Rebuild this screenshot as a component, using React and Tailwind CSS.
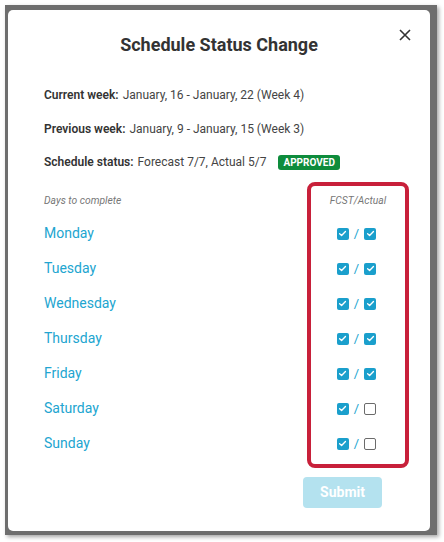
import React from 'react';

const days = [
  { name: 'Monday', fcst: true, actual: true },
  { name: 'Tuesday', fcst: true, actual: true },
  { name: 'Wednesday', fcst: true, actual: true },
  { name: 'Thursday', fcst: true, actual: true },
  { name: 'Friday', fcst: true, actual: true },
  { name: 'Saturday', fcst: true, actual: false },
  { name: 'Sunday', fcst: true, actual: false },
];

function Box({ checked }) {
  if (!checked) {
    return <span className="block w-[12px] h-[12px] rounded-[2px] border-[1.5px] border-[#6b6b6b] bg-white" />;
  }
  return (
    <span className="flex w-[12px] h-[12px] rounded-[2px] bg-[#1a9fcc] items-center justify-center">
      <svg width="9" height="9" viewBox="0 0 10 10" fill="none">
        <path d="M1.8 5.2 L4 7.2 L8.3 2.8" stroke="white" strokeWidth="1.5" strokeLinecap="round" strokeLinejoin="round" />
      </svg>
    </span>
  );
}

function InfoLine({ label, children }) {
  return (
    <div className="flex items-center h-[16px] text-[12px] leading-[16px]">
      <span className="font-semibold text-[#333]">{label}</span>
      <span className="ml-[4px] text-[#444]">{children}</span>
    </div>
  );
}

export default function App() {
  return (
    <div className="w-[444px] h-[542px] bg-white p-[5px] font-['Roboto',sans-serif]">
      <div className="w-[432px] h-[530px] bg-[#6e6e6e] pl-[3px] pt-[5px] shadow-[2px_2px_4px_rgba(0,0,0,0.35)]">
        <div className="relative w-[422px] h-[521px] bg-white rounded-[5px] flex flex-col">
          <button className="absolute top-[19px] right-[19px] text-[#333]">
            <svg width="12" height="12" viewBox="0 0 12 12" fill="none">
              <path d="M1 1 L11 11 M11 1 L1 11" stroke="#333" strokeWidth="1.6" />
            </svg>
          </button>

          <h1 className="pt-[23px] text-center text-[18px] leading-[24px] font-bold text-[#333]">
            Schedule Status Change
          </h1>

          <div className="px-[36px] mt-[30px] flex flex-col gap-[17.5px]">
            <InfoLine label="Current week:">January, 16 - January, 22 (Week 4)</InfoLine>
            <InfoLine label="Previous week:">January, 9 - January, 15 (Week 3)</InfoLine>
            <InfoLine label="Schedule status:">
              Forecast 7/7, Actual 5/7
              <span className="ml-[12px] inline-block align-middle px-[5px] h-[15px] leading-[15px] rounded-[3px] bg-[#0e8c3c] text-white text-[10px] font-bold">
                APPROVED
              </span>
            </InfoLine>
          </div>

          <div className="mt-[12px] flex pl-[36px] pr-[21px]">
            <div className="flex-1 pt-[13px]">
              <div className="text-[10.3px] leading-[12px] italic text-[#777]">Days to complete</div>
              <div className="mt-[9px]">
                {days.map((d) => (
                  <div key={d.name} className="h-[35px] flex items-center text-[14px] text-[#22a5d0]">
                    {d.name}
                  </div>
                ))}
              </div>
            </div>
            <div className="w-[102px] h-[286px] border-[4px] border-[#c8203a] rounded-[8px] pt-[9px]">
              <div className="text-center text-[10.3px] leading-[12px] italic text-[#777]">FCST/Actual</div>
              <div className="mt-[9px]">
                {days.map((d) => (
                  <div key={d.name} className="h-[35px] flex items-center justify-center pr-[3px] gap-[5px]">
                    <Box checked={d.fcst} />
                    <span className="text-[13px] leading-none text-[#22a5d0]">/</span>
                    <Box checked={d.actual} />
                  </div>
                ))}
              </div>
            </div>
          </div>

          <div className="flex justify-end pr-[48px] mt-[9px]">
            <button className="w-[79px] h-[31px] rounded-[4px] bg-[#b4e2ef] text-white text-[14px] font-bold">
              Submit
            </button>
          </div>
        </div>
      </div>
    </div>
  );
}
